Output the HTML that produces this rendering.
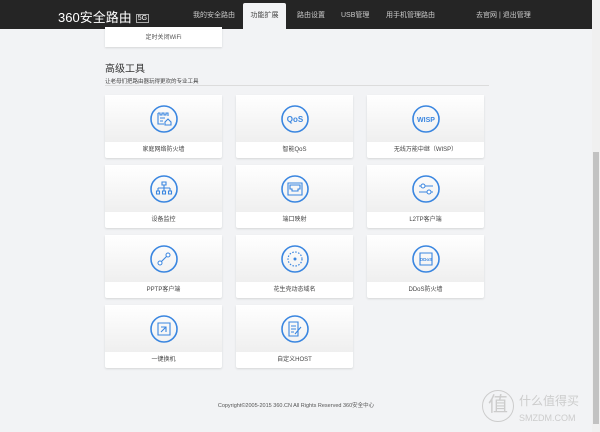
<!DOCTYPE html><html><head><meta charset="utf-8"><style>
*{margin:0;padding:0;box-sizing:border-box}
body{width:600px;height:432px;background:#f2f3f5;font-family:"Liberation Sans","Noto Sans CJK SC",sans-serif;position:relative;overflow:hidden;color:#333}
.hd{position:absolute;left:0;top:0;width:592px;height:29px;background:#252525}
.logo{position:absolute;left:58px;top:7px;color:#fff;font-size:13px;letter-spacing:0px}
.logo span{display:inline-block;border:1px solid #aaa;font-size:7px;padding:0 1px;margin-left:4px;vertical-align:2px}
.nav{position:absolute;top:10px;font-size:7px;color:#ccc}
.act{position:absolute;left:243px;top:3px;width:43px;height:26px;background:#f2f3f5;border-radius:2px 2px 0 0;color:#444;font-size:7px;text-align:center;padding-top:7px}
.sb{position:absolute;left:592px;top:0;width:8px;height:432px;background:#f0f0f0}
.th{position:absolute;left:593px;top:152px;width:6px;height:272px;background:#c2c2c2}
.card{position:absolute;width:117px;height:63px;background:#fff;box-shadow:0 1px 2px rgba(0,0,0,.12);border-radius:2px}
.card .t{height:47px;background:linear-gradient(#fff,#efefef);position:relative}
.card .l{font-size:6px;text-align:center;line-height:16px;color:#444}
.card svg{position:absolute;left:44px;top:9px}
.top{position:absolute;left:105px;top:27px;width:117px;height:20px;background:#fff;box-shadow:0 1px 2px rgba(0,0,0,.12);font-size:6px;text-align:center;line-height:14px;padding-top:4px;color:#555}
h2{position:absolute;left:105px;top:60px;font-size:10px;font-weight:normal;color:#333}
.sub{position:absolute;left:105px;top:77px;font-size:5.5px;color:#444}
.line{position:absolute;left:105px;top:85px;width:384px;height:1px;background:#dcdcdc}
.ft{position:absolute;left:0;width:592px;top:401px;font-size:5.5px;text-align:center;color:#555}
</style></head><body>
<div class="hd">
<div class="logo">360安全路由<span>5G</span></div>
<div class="nav" style="left:193px">我的安全路由</div>
<div class="act">功能扩展</div>
<div class="nav" style="left:297px">路由设置</div>
<div class="nav" style="left:341px">USB管理</div>
<div class="nav" style="left:386px">用手机管理路由</div>
<div class="nav" style="left:476px">去官网 | 退出管理</div>
</div>
<div class="top">定时关闭WiFi</div>
<h2>高级工具</h2>
<div class="sub">让老母们把路由器玩得更欢的专业工具</div>
<div class="line"></div>

<div class="card" style="left:105px;top:95px"><div class="t"><svg width="30" height="30"><circle cx="15" cy="15" r="13" fill="none" stroke="#3a86e0" stroke-width="1.6"/><path d="M9 9v11h6M9 9h2v2h2v-2h2v2h2v-2h2v3M11 14h5M11 17h3M16 18l3-3 3 3v3h-6z" fill="none" stroke="#3a86e0" stroke-width="1.1"/></svg></div><div class="l">家庭网络防火墙</div></div>
<div class="card" style="left:236px;top:95px"><div class="t"><svg width="30" height="30"><circle cx="15" cy="15" r="13" fill="none" stroke="#3a86e0" stroke-width="1.6"/><text x="15" y="18" text-anchor="middle" font-size="8" font-weight="bold" fill="#3a86e0" font-family="Liberation Sans">QoS</text></svg></div><div class="l">智能QoS</div></div>
<div class="card" style="left:367px;top:95px"><div class="t"><svg width="30" height="30"><circle cx="15" cy="15" r="13" fill="none" stroke="#3a86e0" stroke-width="1.6"/><text x="15" y="18" text-anchor="middle" font-size="7" font-weight="bold" fill="#3a86e0" font-family="Liberation Sans">WISP</text></svg></div><div class="l">无线万能中继（WISP）</div></div>

<div class="card" style="left:105px;top:165px"><div class="t"><svg width="30" height="30"><circle cx="15" cy="15" r="13" fill="none" stroke="#3a86e0" stroke-width="1.6"/><path d="M13 8h4v3h-4zM15 11v3M9 14h12M9 14v3M15 14v3M21 14v3M7.5 17h3v3h-3zM13.5 17h3v3h-3zM19.5 17h3v3h-3z" fill="none" stroke="#3a86e0" stroke-width="1.1"/></svg></div><div class="l">设备监控</div></div>
<div class="card" style="left:236px;top:165px"><div class="t"><svg width="30" height="30"><circle cx="15" cy="15" r="13" fill="none" stroke="#3a86e0" stroke-width="1.6"/><path d="M8 9h14v12H8zM10 11h10v4h-2v2h-6v-2h-2z" fill="none" stroke="#3a86e0" stroke-width="1.1"/></svg></div><div class="l">端口映射</div></div>
<div class="card" style="left:367px;top:165px"><div class="t"><svg width="30" height="30"><circle cx="15" cy="15" r="13" fill="none" stroke="#3a86e0" stroke-width="1.6"/><path d="M8 12h14M8 18h14" stroke="#3a86e0" stroke-width="1.1"/><circle cx="12" cy="12" r="2" fill="#fff" stroke="#3a86e0"/><circle cx="18" cy="18" r="2" fill="#fff" stroke="#3a86e0"/></svg></div><div class="l">L2TP客户端</div></div>

<div class="card" style="left:105px;top:235px"><div class="t"><svg width="30" height="30"><circle cx="15" cy="15" r="13" fill="none" stroke="#3a86e0" stroke-width="1.6"/><path d="M10 20l10-10" stroke="#3a86e0" stroke-width="1.1"/><circle cx="11" cy="19" r="2" fill="#fff" stroke="#3a86e0"/><circle cx="19" cy="11" r="2" fill="#fff" stroke="#3a86e0"/></svg></div><div class="l">PPTP客户端</div></div>
<div class="card" style="left:236px;top:235px"><div class="t"><svg width="30" height="30"><circle cx="15" cy="15" r="13" fill="none" stroke="#3a86e0" stroke-width="1.6"/><circle cx="15" cy="15" r="7" fill="none" stroke="#3a86e0" stroke-width="1.2" stroke-dasharray="1.5 1.5"/><circle cx="15" cy="15" r="1.5" fill="#3a86e0"/></svg></div><div class="l">花生壳动态域名</div></div>
<div class="card" style="left:367px;top:235px"><div class="t"><svg width="30" height="30"><circle cx="15" cy="15" r="13" fill="none" stroke="#3a86e0" stroke-width="1.6"/><path d="M9 9h12v12H9z" fill="none" stroke="#3a86e0" stroke-width="1.1"/><text x="15" y="17" text-anchor="middle" font-size="4.5" fill="#3a86e0" font-family="Liberation Sans" font-weight="bold">DDoS</text></svg></div><div class="l">DDoS防火墙</div></div>

<div class="card" style="left:105px;top:305px"><div class="t"><svg width="30" height="30"><circle cx="15" cy="15" r="13" fill="none" stroke="#3a86e0" stroke-width="1.6"/><path d="M9 9h12v12H9zM12 13h5v5M12 18l5-5" fill="none" stroke="#3a86e0" stroke-width="1.1"/></svg></div><div class="l">一键换机</div></div>
<div class="card" style="left:236px;top:305px"><div class="t"><svg width="30" height="30"><circle cx="15" cy="15" r="13" fill="none" stroke="#3a86e0" stroke-width="1.6"/><path d="M9 8h9v14H9zM11 12h5M11 15h5M11 18h3M15 20l6-7" fill="none" stroke="#3a86e0" stroke-width="1.1"/></svg></div><div class="l">自定义HOST</div></div>

<div class="ft">Copyright©2005-2015 360.CN All Rights Reserved 360安全中心</div>
<div style="position:absolute;left:482px;top:390px;width:32px;height:32px;border:1.5px solid #ccc;border-radius:50%;color:#ccc;font-size:20px;text-align:center;line-height:28px">值</div>
<div style="position:absolute;left:519px;top:392px;color:#ccc;font-size:12px">什么值得买</div>
<div style="position:absolute;left:519px;top:413px;color:#ccc;font-size:9px">SMZDM.COM</div>
<div class="sb"></div><div class="th"></div>
</body></html>
